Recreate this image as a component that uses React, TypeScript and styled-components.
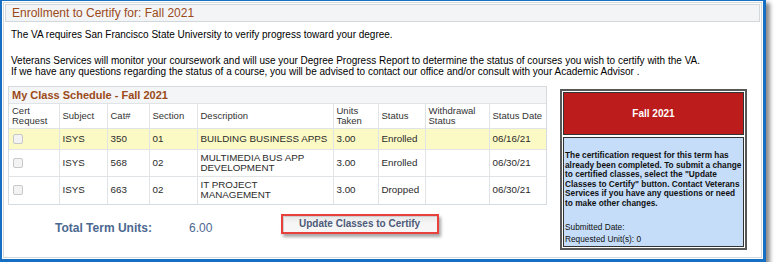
import React from 'react';
import styled, { createGlobalStyle } from 'styled-components';

// --- Data ---
type ClassRow = {
  subject: string;
  cat: string;
  section: string;
  desc: string[];
  units: string;
  status: string;
  withdrawal: string;
  date: string;
  current?: boolean;
};

const CLASSES: ClassRow[] = [
  { subject: 'ISYS', cat: '350', section: '01', desc: ['BUILDING BUSINESS APPS'], units: '3.00', status: 'Enrolled', withdrawal: '', date: '06/16/21', current: true },
  { subject: 'ISYS', cat: '568', section: '02', desc: ['MULTIMEDIA BUS APP', 'DEVELOPMENT'], units: '3.00', status: 'Enrolled', withdrawal: '', date: '06/30/21' },
  { subject: 'ISYS', cat: '663', section: '02', desc: ['IT PROJECT', 'MANAGEMENT'], units: '3.00', status: 'Dropped', withdrawal: '', date: '06/30/21' },
];

const COLUMNS: { label: string[]; width: number }[] = [
  { label: ['Cert', 'Request'], width: 50 },
  { label: ['Subject'], width: 48 },
  { label: ['Cat#'], width: 42 },
  { label: ['Section'], width: 48 },
  { label: ['Description'], width: 136 },
  { label: ['Units', 'Taken'], width: 45 },
  { label: ['Status'], width: 47 },
  { label: ['Withdrawal', 'Status'], width: 64 },
  { label: ['Status Date'], width: 57 },
];

const NOTICE_LINES = [
  'The certification request for this term has',
  'already been completed. To submit a change',
  'to certified classes, select the "Update',
  'Classes to Certify" button. Contact Veterans',
  'Services if you have any questions or need',
  'to make other changes.',
];

// --- Global ---
const GlobalStyle = createGlobalStyle`
  html, body {
    margin: 0;
    padding: 0;
    background: #fff;
    overflow: hidden;
  }
  body {
    font-family: "Liberation Sans", Arial, sans-serif;
  }
`;

// --- Frame ---
const Frame = styled.div`
  box-sizing: border-box;
  width: 767px;
  height: 264px;
  margin: -2px 0 0 -1px;
  padding: 1px;
  border: 3px solid #166fc3;
  background: #fff;
  box-shadow: 4px 5px 4px rgba(0, 0, 0, 0.45);
`;

const Inner = styled.div`
  box-sizing: border-box;
  height: 100%;
  border: 1px solid #d3d8dd;
  padding: 1px;
`;

const HeaderBar = styled.div`
  box-sizing: border-box;
  height: 18px;
  border: 1px solid #d2d7dc;
  background: #f3f4f5;
  padding-left: 6px;
  font-size: 12px;
  line-height: 16px;
  color: #9b4a1a;
`;

const Content = styled.div`
  padding: 0 3px;
`;

const Intro = styled.div`
  padding: 7px 0 0 3px;
  font-size: 10px;
  line-height: 11px;
  color: #000;
`;

const Para = styled.p<{ $gap?: number }>`
  margin: ${p => p.$gap ?? 0}px 0 0;
`;

const Main = styled.div`
  display: flex;
  align-items: flex-start;
  gap: 13px;
  margin-top: 9px;
`;

const LeftCol = styled.div`
  width: 539px;
`;

// --- Class schedule ---
const Panel = styled.div`
  box-sizing: border-box;
  width: 539px;
  border: 1px solid #d5dadf;
`;

const PanelTitle = styled.div`
  height: 16px;
  padding-left: 3px;
  background: #f4f5f6;
  border-bottom: 1px solid #e1e4e6;
  font-size: 11px;
  font-weight: bold;
  line-height: 16px;
  color: #9b4a1a;
`;

const Grid = styled.table`
  width: 100%;
  table-layout: fixed;
  border-collapse: collapse;
  border-style: hidden;
`;

const Th = styled.th`
  height: 24px;
  padding: 0 3px;
  border: 1px solid #e1e4e6;
  font-size: 9.5px;
  font-weight: normal;
  line-height: 10.5px;
  color: #333;
  text-align: left;
  vertical-align: middle;
`;

const Tr = styled.tr<{ $current?: boolean; $tall?: boolean }>`
  height: ${p => (p.$tall ? 27 : 21)}px;
  background: ${p => (p.$current ? '#fcfac4' : '#fff')};
`;

const Td = styled.td`
  padding: 0 3px;
  border: 1px solid #e1e4e6;
  font-size: 9.8px;
  line-height: 10.5px;
  color: #2b2b2b;
  white-space: nowrap;
  vertical-align: middle;
`;

const Check = styled.input`
  appearance: none;
  display: block;
  box-sizing: border-box;
  width: 10px;
  height: 10px;
  margin: 0 0 0 1px;
  border: 1px solid #c8c8c8;
  border-radius: 2px;
  background: #f3f3f3;
`;

// --- Totals ---
const TotalsRow = styled.div`
  display: flex;
  align-items: flex-start;
  padding: 9px 0 0 47px;
`;

const TotalLabel = styled.div`
  width: 134px;
  margin-top: 7px;
  font-size: 12px;
  font-weight: bold;
  line-height: 14px;
  color: #4c6890;
`;

const TotalValue = styled.div`
  width: 92px;
  margin-top: 7px;
  font-size: 12px;
  line-height: 14px;
  color: #4c6890;
`;

const UpdateButton = styled.button`
  box-sizing: border-box;
  width: 158px;
  height: 20px;
  padding: 0 0 0 16px;
  border: 2px solid #e8403d;
  background: linear-gradient(#e6e6e6, #f6f6f6 45%, #f6f6f6);
  box-shadow: 2px 3px 3px rgba(0, 0, 0, 0.35), inset 1px 1px 0 #cfcfcf;
  font-family: inherit;
  font-size: 10px;
  font-weight: bold;
  color: #4d5a78;
  text-align: left;
  line-height: 14px;
`;

// --- Term status box ---
const TermBox = styled.div`
  box-sizing: border-box;
  width: 187px;
  margin-top: 3px;
  padding: 1px;
  border: 2px solid #585858;
  background: #fff;
  display: flex;
  flex-direction: column;
  gap: 2px;
`;

const TermHead = styled.div`
  box-sizing: border-box;
  height: 43px;
  border: 1px solid #333;
  background: #bc1c1b;
  display: flex;
  align-items: center;
  justify-content: center;
  font-size: 10px;
  font-weight: bold;
  color: #fff;
`;

const Notice = styled.div`
  box-sizing: border-box;
  height: 110px;
  padding: 13px 0 0 1px;
  border: 1px solid #333;
  background: #c5ddf9;
  color: #111;
`;

const NoticeText = styled.div`
  font-size: 8.3px;
  font-weight: bold;
  line-height: 9.5px;
  white-space: nowrap;
`;

const Meta = styled.div`
  margin-top: 13px;
  font-size: 8.3px;
  line-height: 12px;
  white-space: nowrap;
`;

// --- Component ---
export default function App() {
  return (
    <>
      <GlobalStyle />
      <Frame>
        <Inner>
          <HeaderBar>Enrollment to Certify for: Fall 2021</HeaderBar>
          <Content>
            <Intro>
              <Para>The VA requires San Francisco State University to verify progress toward your degree.</Para>
              <Para $gap={15}>
                Veterans Services will monitor your coursework and will use your Degree Progress Report to determine the status of courses you wish to certify with the VA.
                <br />
                If we have any questions regarding the status of a course, you will be advised to contact our office and/or consult with your Academic Advisor .
              </Para>
            </Intro>

            <Main>
              <LeftCol>
                <Panel>
                  <PanelTitle>My Class Schedule - Fall 2021</PanelTitle>
                  <Grid>
                    <colgroup>
                      {COLUMNS.map((c, i) => (
                        <col key={i} style={{ width: c.width }} />
                      ))}
                    </colgroup>
                    <thead>
                      <tr>
                        {COLUMNS.map((c, i) => (
                          <Th key={i}>
                            {c.label.map((l, j) => (
                              <React.Fragment key={j}>
                                {j > 0 && <br />}
                                {l}
                              </React.Fragment>
                            ))}
                          </Th>
                        ))}
                      </tr>
                    </thead>
                    <tbody>
                      {CLASSES.map((row, i) => (
                        <Tr key={i} $current={row.current} $tall={row.desc.length > 1}>
                          <Td>
                            <Check type="checkbox" disabled />
                          </Td>
                          <Td>{row.subject}</Td>
                          <Td>{row.cat}</Td>
                          <Td>{row.section}</Td>
                          <Td>
                            {row.desc.map((d, j) => (
                              <React.Fragment key={j}>
                                {j > 0 && <br />}
                                {d}
                              </React.Fragment>
                            ))}
                          </Td>
                          <Td>{row.units}</Td>
                          <Td>{row.status}</Td>
                          <Td>{row.withdrawal}</Td>
                          <Td>{row.date}</Td>
                        </Tr>
                      ))}
                    </tbody>
                  </Grid>
                </Panel>

                <TotalsRow>
                  <TotalLabel>Total Term Units:</TotalLabel>
                  <TotalValue>6.00</TotalValue>
                  <UpdateButton type="button">Update Classes to Certify</UpdateButton>
                </TotalsRow>
              </LeftCol>

              <TermBox>
                <TermHead>Fall 2021</TermHead>
                <Notice>
                  <NoticeText>
                    {NOTICE_LINES.map((l, i) => (
                      <div key={i}>{l}</div>
                    ))}
                  </NoticeText>
                  <Meta>
                    Submitted Date:
                    <br />
                    Requested Unit(s): 0
                  </Meta>
                </Notice>
              </TermBox>
            </Main>
          </Content>
        </Inner>
      </Frame>
    </>
  );
}
